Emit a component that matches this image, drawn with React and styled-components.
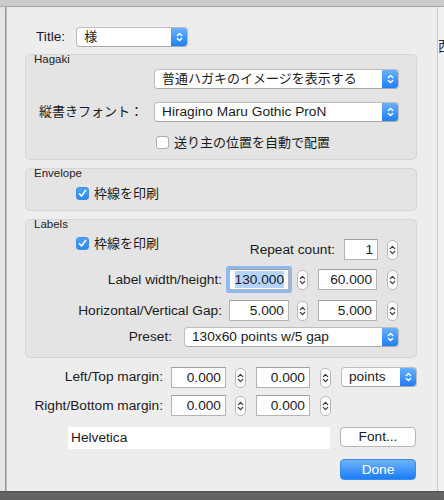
import React from "react";
import styled, { createGlobalStyle } from "styled-components";

const GlobalStyle = createGlobalStyle`
  html, body { margin: 0; padding: 0; }
  * { box-sizing: border-box; }
  body {
    width: 444px;
    height: 500px;
    overflow: hidden;
    font-family: "Liberation Sans", "Noto Sans CJK JP", sans-serif;
    font-size: 13.7px;
    color: #1b1b1b;
  }
`;

// Desktop frame around the sheet
const Screen = styled.div`
  display: grid;
  grid-template-columns: 7px 430px 7px;
  grid-template-rows: 7px 484px 9px;
  width: 444px;
  height: 500px;
`;

const TopBand = styled.div`
  grid-column: 1 / 4;
  background: #cdcbcc;
  border-bottom: 1px solid #a9a9a9;
`;

const LeftEdge = styled.div`
  background: linear-gradient(to right, #e5e5e5 0 5px, #9d9d9d 5px 6px, #d4d4d4 6px);
`;

const RightEdge = styled.div`
  background: #f1f1f1;
  overflow: hidden;
  padding-top: 31px;
  border-left: 1px solid #c9c9c9;
`;

const Peek = styled.span`
  display: block;
  font-size: 14px;
  line-height: 16px;
  color: #1a2a50;
  white-space: nowrap;
`;

const BottomBand = styled.div`
  grid-column: 1 / 4;
  background: linear-gradient(#4c4c4c, #666 2px, #616161);
`;

// Sheet
const Sheet = styled.div`
  background: #ededed;
  display: flex;
  flex-direction: column;
  padding: 20px 20px 11px 18px;
  box-shadow: 0 1px 2px rgba(0, 0, 0, 0.35);
`;

const Row = styled.div`
  display: flex;
  align-items: ${(p) => p.align || "center"};
  justify-content: ${(p) => p.justify || "flex-start"};
  margin-top: ${(p) => p.mt || 0}px;
  margin-left: ${(p) => (p.pushRight ? "auto" : "0")};
  padding-left: ${(p) => p.pl || 0}px;
  padding-right: ${(p) => p.pr || 0}px;
`;

const Label = styled.span`
  width: ${(p) => (p.w ? p.w + "px" : "auto")};
  flex: none;
  text-align: right;
  margin-left: ${(p) => p.ml || 0}px;
  margin-top: ${(p) => p.mt || 0}px;
  white-space: nowrap;
  line-height: 16px;
`;

const Ja = styled.span`
  font-size: 13px;
`;

const Box = styled.div`
  margin-top: ${(p) => p.mt || 0}px;
  background: #e4e4e4;
  border: 1px solid #d6d6d6;
  border-radius: 5px;
  padding-bottom: 10px;
  display: flex;
  flex-direction: column;
`;

const BoxTitle = styled.div`
  font-size: 11.5px;
  line-height: 13px;
  margin-top: -2px;
  padding-left: 8px;
  color: #222;
`;

// Popup button
const PopupWrap = styled.div`
  width: ${(p) => p.w}px;
  height: 20px;
  margin-left: ${(p) => p.ml || 0}px;
  flex: none;
  display: flex;
  background: #fff;
  border: 1px solid #bdbdbd;
  border-bottom-color: #a9a9a9;
  border-radius: 4px;
  overflow: hidden;
`;

const PopupText = styled.div`
  flex: 1;
  padding-left: 7px;
  line-height: 18px;
  white-space: nowrap;
  overflow: hidden;
`;

const PopupArrows = styled.div`
  width: 16px;
  flex: none;
  display: flex;
  align-items: center;
  justify-content: center;
  background: linear-gradient(#69b1fb, #1f7ff6);
`;

const UpDown = ({ color = "#fff", w = 7, h = 12, sw = 1.4 }) => (
  <svg width={w} height={h} viewBox="0 0 7 12">
    <path d="M1.3 4.6 L3.5 2.4 L5.7 4.6 M1.3 7.4 L3.5 9.6 L5.7 7.4" fill="none" stroke={color} strokeWidth={sw} strokeLinecap="round" strokeLinejoin="round" />
  </svg>
);

const Popup = ({ w, ml, children }) => (
  <PopupWrap w={w} ml={ml}>
    <PopupText>{children}</PopupText>
    <PopupArrows>
      <UpDown />
    </PopupArrows>
  </PopupWrap>
);

// Text fields and steppers
const Field = styled.div`
  width: ${(p) => p.w}px;
  height: ${(p) => p.h || 21}px;
  margin-left: ${(p) => p.ml || 0}px;
  flex: none;
  background: #fff;
  border: ${(p) => (p.plain ? "none" : "1px solid #b4b4b4")};
  border-top-color: #9f9f9f;
  text-align: ${(p) => (p.left ? "left" : "right")};
  padding: ${(p) => (p.left ? "0 0 0 3px" : "0 4px 0 0")};
  line-height: ${(p) => (p.plain ? 22 : 19)}px;
  white-space: nowrap;
  ${(p) => p.focus && "box-shadow: 0 0 0 3px #8fb9ee; border-radius: 1px;"}
`;

const Selected = styled.span`
  background: #b4d4fc;
  padding: 1px 0;
`;

const StepperWrap = styled.div`
  width: 11px;
  height: 20px;
  margin-left: ${(p) => p.ml || 0}px;
  margin-top: 1px;
  flex: none;
  background: #fff;
  border: 1px solid #b8b8b8;
  border-radius: 5px;
  display: flex;
  align-items: center;
  justify-content: center;
`;

const Stepper = ({ ml }) => (
  <StepperWrap ml={ml}>
    <UpDown color="#3a3a3a" w={7} h={14} sw={1.3} />
  </StepperWrap>
);

// Checkboxes
const CheckWrap = styled.div`
  display: flex;
  align-items: center;
  height: 13px;
  margin-left: ${(p) => p.ml || 0}px;
`;

const CheckSquare = styled.div`
  width: 13px;
  height: 13px;
  flex: none;
  border-radius: 3px;
  display: flex;
  align-items: center;
  justify-content: center;
  background: ${(p) => (p.on ? "linear-gradient(#4fa2f8, #2c89f3)" : "#fff")};
  border: 1px solid ${(p) => (p.on ? "#3e8fe8" : "#ababab")};
`;

const CheckText = styled.span`
  margin-left: 5px;
  font-size: 13px;
  line-height: 16px;
  white-space: nowrap;
`;

const Check = ({ on, ml, children }) => (
  <CheckWrap ml={ml}>
    <CheckSquare on={on}>
      {on && (
        <svg width="9" height="9" viewBox="0 0 9 9">
          <path d="M1.4 4.8 L3.5 7 L7.6 1.6" fill="none" stroke="#fff" strokeWidth="1.6" strokeLinecap="round" strokeLinejoin="round" />
        </svg>
      )}
    </CheckSquare>
    <CheckText>{children}</CheckText>
  </CheckWrap>
);

// Push buttons
const Button = styled.div`
  width: ${(p) => p.w}px;
  height: ${(p) => p.h || 20}px;
  margin-left: ${(p) => p.ml || 0}px;
  margin-right: ${(p) => p.mr || 0}px;
  margin-top: ${(p) => p.mt || 0}px;
  flex: none;
  border-radius: 4px;
  text-align: center;
  line-height: ${(p) => (p.h || 20) - 2}px;
  background: ${(p) => (p.primary ? "linear-gradient(#6db2fb, #1b7df6)" : "#fff")};
  color: ${(p) => (p.primary ? "#fff" : "#1b1b1b")};
  border: 1px solid ${(p) => (p.primary ? "#3a8ced" : "#b6b6b6")};
  align-self: ${(p) => p.self || "auto"};
`;

const App = () => {
  return (
    <>
      <GlobalStyle />
      <Screen>
        <TopBand />
        <LeftEdge />
        <Sheet>
          <Row>
            <Label ml={11}>Title:</Label>
            <Popup w={112} ml={11}><Ja>様</Ja></Popup>
          </Row>

          <Box mt={7}>
            <BoxTitle>Hagaki</BoxTitle>
            <Row mt={3} pl={128}>
              <Popup w={245}><Ja>普通ハガキのイメージを表示する</Ja></Popup>
            </Row>
            <Row mt={13}>
              <Label w={117}><Ja>縦書きフォント：</Ja></Label>
              <Popup w={245} ml={11}>Hiragino Maru Gothic ProN</Popup>
            </Row>
            <Row mt={14}>
              <Check ml={130}>送り主の位置を自動で配置</Check>
            </Row>
          </Box>

          <Box mt={8}>
            <BoxTitle>Envelope</BoxTitle>
            <Row mt={7}>
              <Check on ml={50}>枠線を印刷</Check>
            </Row>
          </Box>

          <Box mt={8}>
            <BoxTitle>Labels</BoxTitle>
            <Row mt={6} align="flex-start" pr={18}>
              <Check on ml={50}>枠線を印刷</Check>
              <Row mt={2} pushRight>
                <Label>Repeat count:</Label>
                <Field w={34} ml={9}>1</Field>
                <Stepper ml={9} />
              </Row>
            </Row>
            <Row mt={9} justify="flex-end" pr={18}>
              <Label>Label width/height:</Label>
              <Field w={60} ml={7} focus>
                <Selected>130.000</Selected>
              </Field>
              <Stepper ml={8} />
              <Field w={59} ml={10}>60.000</Field>
              <Stepper ml={10} />
            </Row>
            <Row mt={10} justify="flex-end" pr={18}>
              <Label>Horizontal/Vertical Gap:</Label>
              <Field w={60} ml={7}>5.000</Field>
              <Stepper ml={8} />
              <Field w={59} ml={10}>5.000</Field>
              <Stepper ml={10} />
            </Row>
            <Row mt={6} justify="flex-end" pr={17}>
              <Label>Preset:</Label>
              <Popup w={215} ml={12}>130x60 points w/5 gap</Popup>
            </Row>
          </Box>

          <Row mt={9} align="flex-start">
            <Label w={138} mt={2}>Left/Top margin:</Label>
            <Field w={55} ml={8}>0.000</Field>
            <Stepper ml={9} />
            <Field w={54} ml={10}>0.000</Field>
            <Stepper ml={10} />
            <Popup w={76} ml={10}>points</Popup>
          </Row>
          <Row mt={7}>
            <Label w={138}>Right/Bottom margin:</Label>
            <Field w={55} ml={8}>0.000</Field>
            <Stepper ml={9} />
            <Field w={54} ml={10}>0.000</Field>
            <Stepper ml={10} />
          </Row>

          <Row mt={11} align="flex-start">
            <Field w={262} h={22} ml={43} plain left>Helvetica</Field>
            <Button w={76} ml={10}>Font...</Button>
          </Row>

          <Button primary w={76} h={21} mt={10} mr={1} self="flex-end">Done</Button>
        </Sheet>
        <RightEdge>
          <Peek>西</Peek>
        </RightEdge>
        <BottomBand />
      </Screen>
    </>
  );
};

export default App;
